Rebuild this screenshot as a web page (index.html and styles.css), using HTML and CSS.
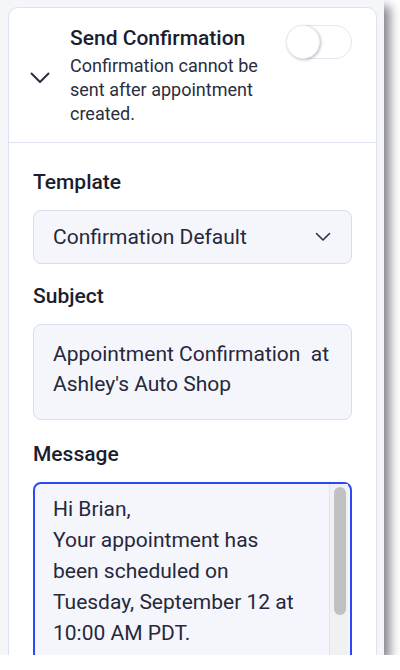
FILE: index.html
```html
<!DOCTYPE html>
<html lang="en">
<head>
<meta charset="UTF-8">
<meta name="viewport" content="width=device-width, initial-scale=1.0">
<title>Send Confirmation</title>
<link rel="stylesheet" href="styles.css">
</head>
<body>

<div class="frame">
    <div class="card">
        <div class="card-header">
            <div class="collapse">
                <svg width="20" height="12" viewBox="0 0 20 12"><path d="M1.5 1.5 L10 10 L18.5 1.5" fill="none" stroke="#2b2e45" stroke-width="2" stroke-linecap="round" stroke-linejoin="round"/></svg>
            </div>
            <div class="header-text">
                <h2>Send Confirmation</h2>
                <p>Confirmation cannot be sent after appointment created.</p>
            </div>
            <div class="toggle"><span class="knob"></span></div>
        </div>

        <div class="card-body">
            <label class="field-label">Template</label>
            <div class="select">
                <span>Confirmation Default</span>
                <svg width="16" height="10" viewBox="0 0 16 10"><path d="M1.5 1.5 L8 8 L14.5 1.5" fill="none" stroke="#2b2e45" stroke-width="1.6" stroke-linecap="round" stroke-linejoin="round"/></svg>
            </div>

            <label class="field-label">Subject</label>
            <div class="textbox subject">Appointment Confirmation&nbsp; at Ashley's Auto Shop</div>

            <label class="field-label">Message</label>
            <div class="textbox message">
                <div class="message-text">
                    Hi Brian,<br>
                    Your appointment has been scheduled on Tuesday, September 12 at 10:00 AM PDT.
                </div>
                <div class="scrollbar"><span class="thumb"></span></div>
            </div>
        </div>
    </div>
</div>

</body>
</html>
```

FILE: styles.css
```css
body {
    margin: 0;
    background: #ffffff;
    font-family: Roboto, "Liberation Sans", sans-serif;
    color: #23253a;
}
.frame {
    width: 384px;
    height: 655px;
    overflow: hidden;
    background: #f5f6fa;
    padding: 7px 0 0 8px;
    box-sizing: border-box;
    box-shadow: 6px 6px 10px rgba(30, 32, 50, 0.55);
}
.card {
    width: 369px;
    background: #fff;
    border: 1px solid #dfe1ef;
    border-radius: 10px;
    box-sizing: border-box;
}
.card-header {
    display: flex;
    align-items: flex-start;
    padding: 18px 24px 16px 0;
    border-bottom: 1px solid #dfe1ef;
}
.collapse {
    width: 61px;
    align-self: center;
    display: flex;
    justify-content: center;
    padding-top: 4px;
}
.header-text {
    flex: 1;
}
.header-text h2 {
    margin: 0;
    font-size: 21px;
    line-height: 24px;
    font-weight: 500;
    color: #1b1d30;
}
.header-text p {
    margin: 4px 0 0;
    font-size: 18px;
    line-height: 24px;
    color: #2b2d40;
    width: 205px;
}
.toggle {
    width: 66px;
    height: 34px;
    border: 1px solid #e6e6f4;
    border-radius: 18px;
    box-sizing: border-box;
    margin-top: -1px;
    position: relative;
    background: #fff;
}
.knob {
    position: absolute;
    left: -1px;
    top: -1px;
    width: 34px;
    height: 34px;
    border-radius: 50%;
    background: #fff;
    border: 1px solid #ececf3;
    box-sizing: border-box;
    box-shadow: 1px 1px 3px rgba(0, 0, 0, 0.25);
}
.card-body {
    padding: 27px 24px 0 24px;
}
.field-label {
    display: block;
    font-size: 21px;
    line-height: 24px;
    font-weight: 500;
    color: #1b1d30;
    margin-bottom: 16px;
}
.select, .textbox {
    background: #f5f6fb;
    border: 1px solid #d9dcec;
    border-radius: 8px;
    box-sizing: border-box;
    font-size: 21px;
    color: #26283b;
}
.select {
    height: 54px;
    display: flex;
    align-items: center;
    justify-content: space-between;
    padding: 0 20px 0 19px;
    margin-bottom: 20px;
}
.subject {
    height: 96px;
    padding: 14px 12px 0 19px;
    line-height: 30px;
    margin-bottom: 22px;
}
.message {
    height: 220px;
    display: flex;
    border: 2px solid #2c49f5;
    padding: 0 2px 0 18px;
}
.message-text {
    flex: 1;
    padding-top: 10px;
    line-height: 31px;
    padding-right: 24px;
}
.scrollbar {
    width: 19px;
    background: #f1f1f3;
    border-left: 1px solid #e4e4e8;
    padding: 3px 2px 0 4px;
    box-sizing: border-box;
}
.thumb {
    display: block;
    width: 12px;
    height: 128px;
    border-radius: 7px;
    background: #c1c1c4;
}
```
